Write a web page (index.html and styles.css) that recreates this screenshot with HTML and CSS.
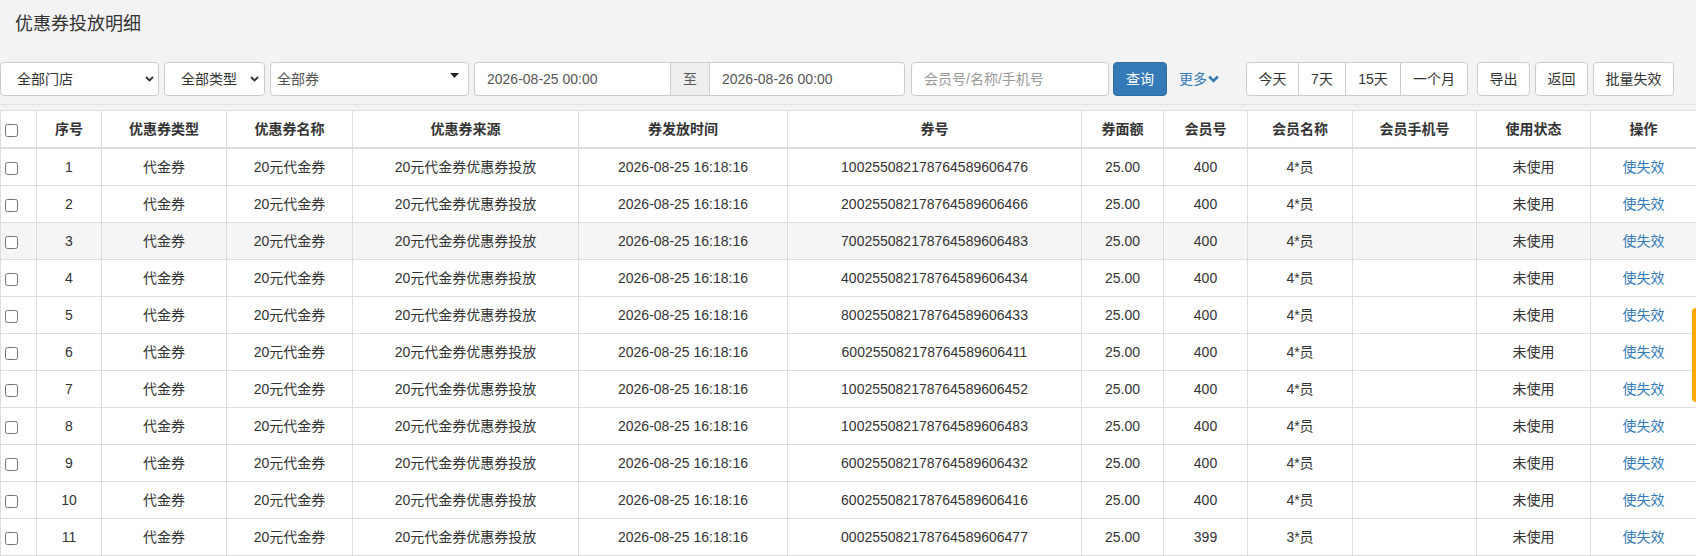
FILE: index.html
```html
<!DOCTYPE html>
<html lang="zh-CN">
<head>
<meta charset="utf-8">
<title>优惠券投放明细</title>
<link rel="stylesheet" href="styles.css">
</head>
<body>
<h1 class="page-title">优惠券投放明细</h1>

<div class="toolbar">
  <div class="field select select-store"><span>全部门店</span>
    <svg class="chev" width="9" height="6" viewBox="0 0 9 6"><path d="M1 1l3.5 3.5L8 1" stroke="#333" stroke-width="1.8" fill="none"/></svg>
  </div>
  <div class="field select select-type"><span>全部类型</span>
    <svg class="chev" width="9" height="6" viewBox="0 0 9 6"><path d="M1 1l3.5 3.5L8 1" stroke="#333" stroke-width="1.8" fill="none"/></svg>
  </div>
  <div class="field select select-coupon"><span>全部券</span>
    <svg class="caret" width="9" height="5" viewBox="0 0 9 5"><path d="M0 0h9L4.5 5z" fill="#222"/></svg>
  </div>
  <div class="date-group">
    <div class="field date-input date-start">2026-08-25 00:00</div>
    <div class="date-addon">至</div>
    <div class="field date-input date-end">2026-08-26 00:00</div>
  </div>
  <div class="field search-input">会员号/名称/手机号</div>
  <div class="btn-primary">查询</div>
  <div class="more-link">更多
    <svg width="11" height="8" viewBox="0 0 11 8"><path d="M1.2 1.5l4.3 4.3 4.3-4.3" stroke="#337ab7" stroke-width="2.6" fill="none"/></svg>
  </div>
  <div class="btn-group">
    <div class="btn btn-g1">今天</div>
    <div class="btn btn-g2">7天</div>
    <div class="btn btn-g3">15天</div>
    <div class="btn btn-g4">一个月</div>
  </div>
  <div class="btn btn-export">导出</div>
  <div class="btn btn-back">返回</div>
  <div class="btn btn-batch">批量失效</div>
</div>

<div class="divider"></div>

<table class="data-table">
  <colgroup>
    <col class="w-check"><col class="w-no"><col class="w-type"><col class="w-name"><col class="w-src"><col class="w-time"><col class="w-code"><col class="w-amt"><col class="w-mem"><col class="w-mname"><col class="w-phone"><col class="w-status"><col class="w-op">
  </colgroup>
  <thead>
    <tr>
      <th class="cell-check"><input type="checkbox"></th>
      <th>序号</th><th>优惠券类型</th><th>优惠券名称</th><th>优惠券来源</th><th>券发放时间</th><th>券号</th><th>券面额</th><th>会员号</th><th>会员名称</th><th>会员手机号</th><th>使用状态</th><th>操作</th>
    </tr>
  </thead>
  <tbody>
    <tr><td class="cell-check"><input type="checkbox"></td><td>1</td><td>代金券</td><td>20元代金券</td><td>20元代金券优惠券投放</td><td>2026-08-25 16:18:16</td><td>100255082178764589606476</td><td>25.00</td><td>400</td><td>4*员</td><td></td><td>未使用</td><td><a class="op-link">使失效</a></td></tr>
    <tr><td class="cell-check"><input type="checkbox"></td><td>2</td><td>代金券</td><td>20元代金券</td><td>20元代金券优惠券投放</td><td>2026-08-25 16:18:16</td><td>200255082178764589606466</td><td>25.00</td><td>400</td><td>4*员</td><td></td><td>未使用</td><td><a class="op-link">使失效</a></td></tr>
    <tr class="row-hover"><td class="cell-check"><input type="checkbox"></td><td>3</td><td>代金券</td><td>20元代金券</td><td>20元代金券优惠券投放</td><td>2026-08-25 16:18:16</td><td>700255082178764589606483</td><td>25.00</td><td>400</td><td>4*员</td><td></td><td>未使用</td><td><a class="op-link">使失效</a></td></tr>
    <tr><td class="cell-check"><input type="checkbox"></td><td>4</td><td>代金券</td><td>20元代金券</td><td>20元代金券优惠券投放</td><td>2026-08-25 16:18:16</td><td>400255082178764589606434</td><td>25.00</td><td>400</td><td>4*员</td><td></td><td>未使用</td><td><a class="op-link">使失效</a></td></tr>
    <tr><td class="cell-check"><input type="checkbox"></td><td>5</td><td>代金券</td><td>20元代金券</td><td>20元代金券优惠券投放</td><td>2026-08-25 16:18:16</td><td>800255082178764589606433</td><td>25.00</td><td>400</td><td>4*员</td><td></td><td>未使用</td><td><a class="op-link">使失效</a></td></tr>
    <tr><td class="cell-check"><input type="checkbox"></td><td>6</td><td>代金券</td><td>20元代金券</td><td>20元代金券优惠券投放</td><td>2026-08-25 16:18:16</td><td>600255082178764589606411</td><td>25.00</td><td>400</td><td>4*员</td><td></td><td>未使用</td><td><a class="op-link">使失效</a></td></tr>
    <tr><td class="cell-check"><input type="checkbox"></td><td>7</td><td>代金券</td><td>20元代金券</td><td>20元代金券优惠券投放</td><td>2026-08-25 16:18:16</td><td>100255082178764589606452</td><td>25.00</td><td>400</td><td>4*员</td><td></td><td>未使用</td><td><a class="op-link">使失效</a></td></tr>
    <tr><td class="cell-check"><input type="checkbox"></td><td>8</td><td>代金券</td><td>20元代金券</td><td>20元代金券优惠券投放</td><td>2026-08-25 16:18:16</td><td>100255082178764589606483</td><td>25.00</td><td>400</td><td>4*员</td><td></td><td>未使用</td><td><a class="op-link">使失效</a></td></tr>
    <tr><td class="cell-check"><input type="checkbox"></td><td>9</td><td>代金券</td><td>20元代金券</td><td>20元代金券优惠券投放</td><td>2026-08-25 16:18:16</td><td>600255082178764589606432</td><td>25.00</td><td>400</td><td>4*员</td><td></td><td>未使用</td><td><a class="op-link">使失效</a></td></tr>
    <tr><td class="cell-check"><input type="checkbox"></td><td>10</td><td>代金券</td><td>20元代金券</td><td>20元代金券优惠券投放</td><td>2026-08-25 16:18:16</td><td>600255082178764589606416</td><td>25.00</td><td>400</td><td>4*员</td><td></td><td>未使用</td><td><a class="op-link">使失效</a></td></tr>
    <tr><td class="cell-check"><input type="checkbox"></td><td>11</td><td>代金券</td><td>20元代金券</td><td>20元代金券优惠券投放</td><td>2026-08-25 16:18:16</td><td>000255082178764589606477</td><td>25.00</td><td>399</td><td>3*员</td><td></td><td>未使用</td><td><a class="op-link">使失效</a></td></tr>
  </tbody>
</table>

<div class="side-tab"></div>
</body>
</html>
```

FILE: styles.css
```css
* { box-sizing: border-box; }

html, body {
  margin: 0;
  height: 100%;
  overflow: hidden;
}

body {
  background: #f3f3f3;
  font-family: "Liberation Sans", "Noto Sans CJK SC", sans-serif;
  font-size: 14px;
  line-height: 20px;
  color: #333;
}

.page-title {
  margin: 0;
  padding: 12px 15px;
  font-size: 18px;
  line-height: 24px;
  font-weight: normal;
  color: #333;
}

.toolbar {
  display: flex;
  align-items: center;
  height: 34px;
  margin-top: 14px;
}

.field {
  height: 34px;
  border: 1px solid #ccc;
  border-radius: 4px;
  background: #fff;
  color: #555;
  display: flex;
  align-items: center;
  white-space: nowrap;
}

.select { justify-content: space-between; color: #333; }

.select-store { width: 159px; padding: 0 4px 0 16px; }
.select-type { width: 101px; margin-left: 5px; padding: 0 5px 0 16px; }
.select-coupon { width: 199px; margin-left: 5px; padding: 0 9px 0 6px; color: #555; }
.select-coupon .caret { margin-top: -8px; }

.date-group { display: flex; margin-left: 5px; }
.date-input { padding-left: 12px; }
.date-start { width: 196px; border-radius: 4px 0 0 4px; border-right: none; }
.date-end { width: 195px; border-radius: 0 4px 4px 0; border-left: none; }
.date-addon {
  width: 40px;
  height: 34px;
  background: #eee;
  border: 1px solid #ccc;
  color: #555;
  display: flex;
  align-items: center;
  justify-content: center;
}

.search-input { width: 198px; margin-left: 6px; padding-left: 12px; color: #999; }

.btn-primary {
  margin-left: 4px;
  width: 54px;
  height: 34px;
  background: #337ab7;
  border: 1px solid #2e6da4;
  border-radius: 4px;
  color: #fff;
  display: flex;
  align-items: center;
  justify-content: center;
}

.more-link {
  margin-left: 12px;
  width: 40px;
  color: #337ab7;
  display: flex;
  align-items: center;
  gap: 1px;
  white-space: nowrap;
}

.btn {
  height: 34px;
  border: 1px solid #ccc;
  border-radius: 4px;
  background: #fff;
  color: #333;
  display: flex;
  align-items: center;
  justify-content: center;
  white-space: nowrap;
}

.btn-group { display: flex; margin-left: 27px; }
.btn-group .btn { border-radius: 0; margin-left: -1px; }
.btn-group .btn:first-child { margin-left: 0; border-radius: 4px 0 0 4px; }
.btn-group .btn:last-child { border-radius: 0 4px 4px 0; }
.btn-g1 { width: 53px; }
.btn-g2 { width: 48px; }
.btn-g3 { width: 56px; }
.btn-g4 { width: 68px; }

.btn-export { width: 53px; margin-left: 9px; }
.btn-back { width: 53px; margin-left: 5px; }
.btn-batch { width: 81px; margin-left: 5px; }

.divider {
  margin-top: 8px;
  margin-bottom: 5px;
  border-top: 1px solid #e2e2e2;
}

.data-table {
  width: 100%;
  border-collapse: collapse;
  table-layout: fixed;
  background: #fff;
}

.data-table th,
.data-table td {
  border: 1px solid #ddd;
  padding: 8px;
  text-align: center;
  line-height: 20px;
  white-space: nowrap;
  overflow: hidden;
  vertical-align: middle;
}

.data-table thead th {
  border-bottom-width: 2px;
  font-weight: bold;
}

.data-table .cell-check {
  padding: 0;
  text-align: left;
}

.cell-check input {
  margin: 0 0 0 4px;
  width: 13px;
  height: 13px;
  vertical-align: middle;
}

.row-hover td { background: #f5f5f5; }

.op-link { color: #337ab7; text-decoration: none; }

.w-check { width: 36px; }
.w-no { width: 65px; }
.w-type { width: 125px; }
.w-name { width: 126px; }
.w-src { width: 226px; }
.w-time { width: 209px; }
.w-code { width: 294px; }
.w-amt { width: 82px; }
.w-mem { width: 84px; }
.w-mname { width: 105px; }
.w-phone { width: 124px; }
.w-status { width: 114px; }
.w-op { width: 106px; }

.side-tab {
  position: fixed;
  right: 0;
  top: 308px;
  width: 4px;
  height: 94px;
  background: #ffa800;
  border-radius: 4px 0 0 4px;
}
```
